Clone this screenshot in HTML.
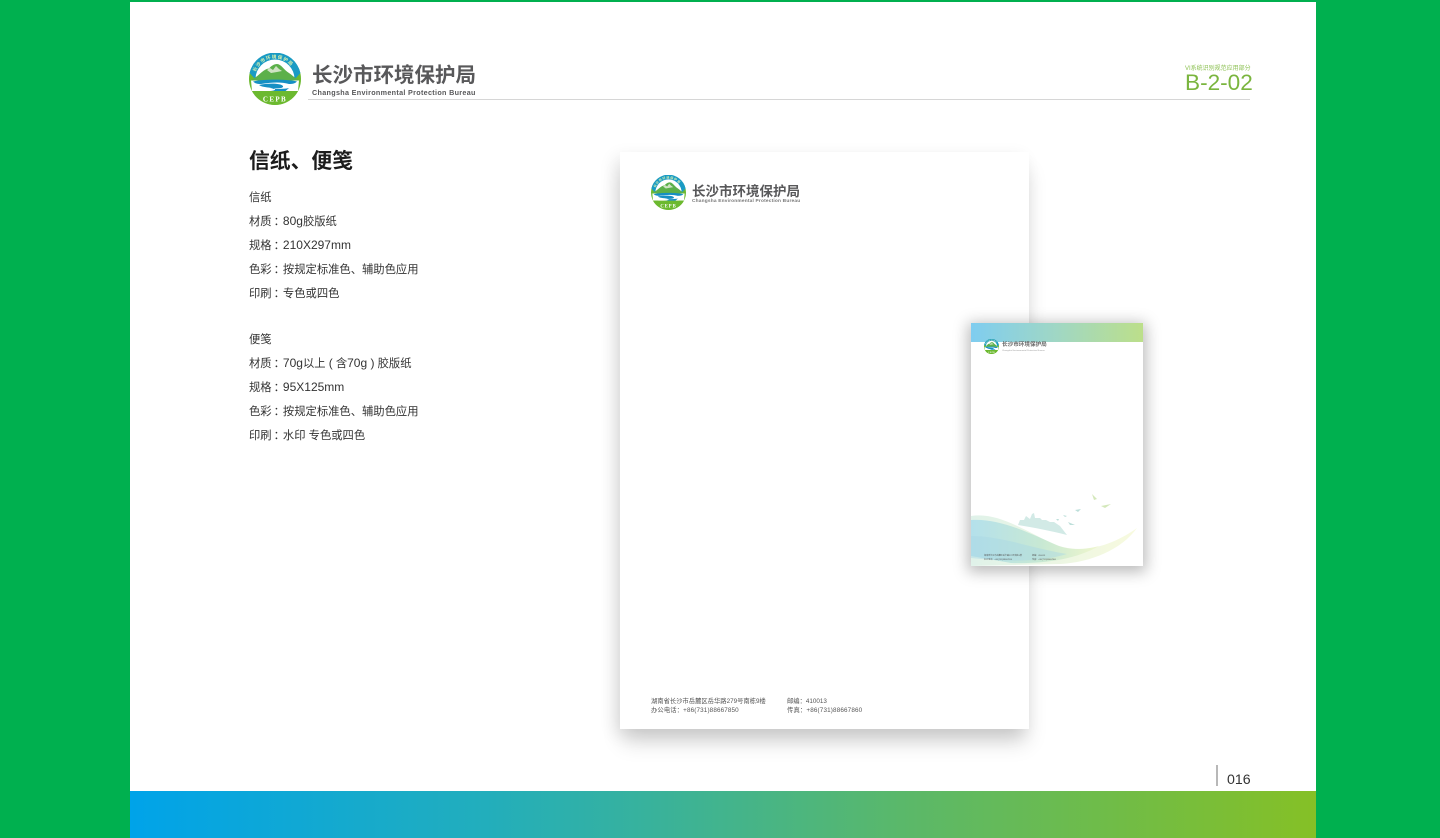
<!DOCTYPE html>
<html lang="zh-CN"><head><meta charset="utf-8"><title>信纸、便笺</title>
<style>
html,body{margin:0;padding:0;width:1440px;height:838px;overflow:hidden;background:#00b04f}
body{position:relative;font-family:"Liberation Sans","Noto Sans CJK SC",sans-serif}
.t{position:absolute;white-space:nowrap;line-height:1}
#page{position:absolute;left:130px;top:2px;width:1186px;height:836px;background:#fff}
#band{position:absolute;left:130px;top:791px;width:1186px;height:47px;background:linear-gradient(90deg,#00a3e9 0%,#22aebc 30%,#5ab86a 65%,#85c026 100%)}
.li{position:absolute;left:249px;font-size:11.3px;color:#333;line-height:14px;white-space:nowrap}
.li b{font-weight:400;font-size:12px}
.li i{font-style:normal;font-family:"Noto Sans CJK TC",sans-serif;position:relative;left:2px}
#sheet{position:absolute;left:620px;top:152px;width:409px;height:577px;background:#fff;box-shadow:-5px 5px 16px rgba(0,0,0,.09),0 16px 20px -3px rgba(0,0,0,.16)}
#note{position:absolute;left:971px;top:323px;width:172px;height:243px;background:#fff;box-shadow:0 3px 14px 3px rgba(0,0,0,.27);overflow:hidden}
</style></head><body>
<svg width="0" height="0" style="position:absolute"><defs>
<symbol id="logo" viewBox="0 0 52 52">
<circle cx="26" cy="26" r="26" fill="#6cb92f"/>
<path d="M0.6 20A26 26 0 0 1 51.4 20L46 26H6Z" fill="#1a9bc4"/>
<circle cx="26" cy="26" r="19.5" fill="#fff"/>
<path d="M3 26.5C10 23 14 16 20 15.5C22 13 25 11 28 11C32 11 35 17 40 20C43 22 46 25 49 26.5L48 29H4Z" fill="#5cb04a"/>
<path d="M18 17L21 15L24 17L27 13L30 16L33 18L28 19L22 20Z" fill="#cfe3c4"/>
<path d="M2 27.5H50L49 38H3Z" fill="#fff"/>
<path d="M4 28.5C14 26 38 26 48 28.5C46 30.5 44 31 40 31C33 29 24 29 12 31C9 31 6 30.5 4 28.5Z" fill="#168fc4"/>
<path d="M10 32C18 30 32 30 34 33C35 36 26 35 21 36C27 36 36 36 40 35L36 38.5H17C20 38 27 38 26 36C22 34 14 35 10 32Z" fill="#168fc4"/>
<path d="M3 38H49A26 26 0 0 1 3 38Z" fill="#6cb92f"/>
<path id="arc" d="M5.5 24A20.6 20.6 0 0 1 46.5 24" fill="none"/>
<text font-size="4.6" font-weight="700" fill="#d8efb0" letter-spacing=".9"><textPath href="#arc" startOffset="5">长沙市环境保护局</textPath></text>
<text x="26" y="48.5" text-anchor="middle" font-family="Liberation Serif,serif" font-size="7" font-weight="700" letter-spacing="1.4" fill="#fff">CEPB</text>
</symbol>
<linearGradient id="w1" x1="0" y1="0" x2="1" y2="0"><stop offset="0" stop-color="#a9dcec"/><stop offset=".55" stop-color="#bfe5cf"/><stop offset="1" stop-color="#eef6c8"/></linearGradient>
<linearGradient id="w2" x1="0" y1="0" x2="1" y2="0"><stop offset="0" stop-color="#d8efe4"/><stop offset="1" stop-color="#f6f9d6"/></linearGradient>
</defs></svg>

<div id="page"></div>
<div id="band"></div>

<svg style="position:absolute;left:249px;top:53px" width="52" height="52"><use href="#logo"/></svg>
<div class="t" style="left:312px;top:66px;font-size:20.5px;font-weight:700;color:#58585a">长沙市环境保护局</div>
<div class="t" style="left:312px;top:89px;font-size:7.2px;font-weight:700;color:#58585a;letter-spacing:.32px">Changsha Environmental Protection Bureau</div>
<div style="position:absolute;left:308px;top:99px;width:942px;height:1px;background:#d6d6d6"></div>
<div class="t" style="left:1185px;top:66px;font-size:6px;color:#8cc152">VI系统识别规范应用部分</div>
<div class="t" style="left:1185px;top:72px;font-size:22.6px;color:#7ab53e">B-2-02</div>

<div class="t" style="left:249px;top:152px;font-size:20.8px;font-weight:700;color:#1c1c1c">信纸、便笺</div>
<div class="li" style="top:191px">信纸</div>
<div class="li" style="top:214px">材质<i>：</i><b>80g</b>胶版纸</div>
<div class="li" style="top:238px">规格<i>：</i><b>210X297mm</b></div>
<div class="li" style="top:262px">色彩<i>：</i>按规定标准色、辅助色应用</div>
<div class="li" style="top:286px">印刷<i>：</i>专色或四色</div>
<div class="li" style="top:333px">便笺</div>
<div class="li" style="top:356px">材质<i>：</i><b>70g</b>以上 <b>(</b> 含<b>70g )</b> 胶版纸</div>
<div class="li" style="top:380px">规格<i>：</i><b>95X125mm</b></div>
<div class="li" style="top:404px">色彩<i>：</i>按规定标准色、辅助色应用</div>
<div class="li" style="top:428px">印刷<i>：</i>水印 专色或四色</div>

<div id="sheet"></div>
<svg style="position:absolute;left:651px;top:175px" width="35" height="35"><use href="#logo"/></svg>
<div class="t" style="left:692px;top:185px;font-size:13.5px;font-weight:700;color:#58585a">长沙市环境保护局</div>
<div class="t" style="left:692px;top:200px;font-size:4.8px;font-weight:700;color:#777;letter-spacing:.19px">Changsha Environmental Protection Bureau</div>
<div class="t" style="left:651px;top:699px;font-size:6.3px;color:#555">湖南省长沙市岳麓区岳华路279号南栋9楼</div>
<div class="t" style="left:651px;top:708px;font-size:6.3px;color:#555;letter-spacing:.14px">办公电话：+86(731)88667850</div>
<div class="t" style="left:787px;top:699px;font-size:6.3px;color:#555">邮编：410013</div>
<div class="t" style="left:787px;top:708px;font-size:6.3px;color:#555;letter-spacing:.16px">传真：+86(731)88667860</div>

<div id="note">
<div style="position:absolute;left:0;top:0;width:172px;height:19px;background:linear-gradient(90deg,#7fcdf0,#a0d7c4 50%,#bcdf8a)"></div>
<svg style="position:absolute;left:13px;top:16px" width="15" height="15"><use href="#logo"/></svg>
<div class="t" style="left:31px;top:20px;font-size:5.6px;font-weight:700;color:#666">长沙市环境保护局</div>
<div class="t" style="left:31px;top:27px;font-size:2.2px;color:#999">Changsha Environmental Protection Bureau</div>
<svg style="position:absolute;left:0;top:165px" width="172" height="78" viewBox="0 0 172 78">
<path d="M47 37L49 32L53 32L55 28L59 31L61 26L63 25L64 30L69 30L71 32L75 32L79 34L83 34L89 38L96 47C80 43 65 40 47 37Z" fill="#b4dcd6" opacity=".6"/>
<path d="M0 28C25 24 50 40 80 55C105 66 135 62 166 40C150 62 120 74 90 76L0 78Z" fill="url(#w2)" opacity=".8"/>
<path d="M0 32C30 30 60 46 88 58C100 62 112 62 128 58C104 72 70 76 40 75L0 68Z" fill="url(#w1)" opacity=".8"/>
<path d="M0 48C30 48 60 60 96 66C70 74 40 74 0 70Z" fill="#a8d8e4" opacity=".45"/>
<g fill="#d0e6b4" opacity=".9"><path d="M121 6L126 11L123 12Z"/><path d="M130 18L140 16L134 20Z"/></g>
<g fill="#b6dcd6" opacity=".9"><path d="M104 22L110 21L107 24Z"/><path d="M92 27L96 28L94 29Z"/><path d="M85 31L88 31L87 33Z"/><path d="M97 34L104 37L99 37Z"/></g>
</svg>
<div class="t" style="left:13px;top:232px;font-size:2.1px;color:#555">湖南省长沙市岳麓区岳华路279号南栋9楼</div>
<div class="t" style="left:13px;top:236px;font-size:2.1px;color:#555">办公电话：+86(731)88667850</div>
<div class="t" style="left:61px;top:232px;font-size:2.1px;color:#555">邮编：410013</div>
<div class="t" style="left:61px;top:236px;font-size:2.1px;color:#555">传真：+86(731)88667860</div>
</div>

<div style="position:absolute;left:1216px;top:765px;width:2px;height:21px;background:#b8b8b8"></div>
<div class="t" style="left:1227px;top:773px;font-size:14.2px;color:#333">016</div>
</body></html>
